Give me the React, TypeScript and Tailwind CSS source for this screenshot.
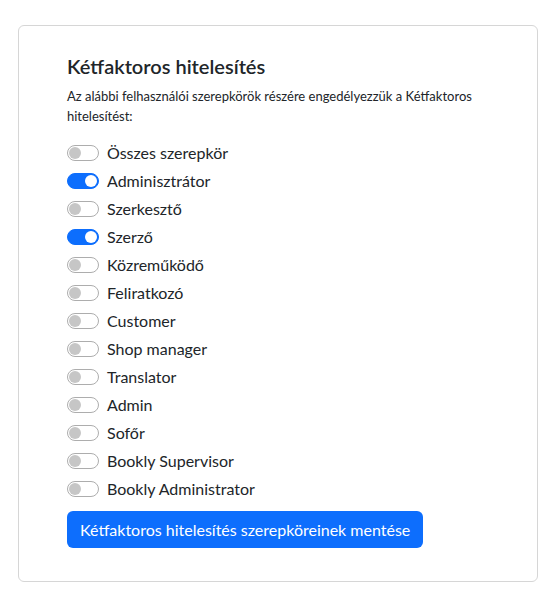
import React from 'react';

const roles: { name: string; on: boolean }[] = [
  { name: 'Összes szerepkör', on: false },
  { name: 'Adminisztrátor', on: true },
  { name: 'Szerkesztő', on: false },
  { name: 'Szerző', on: true },
  { name: 'Közreműködő', on: false },
  { name: 'Feliratkozó', on: false },
  { name: 'Customer', on: false },
  { name: 'Shop manager', on: false },
  { name: 'Translator', on: false },
  { name: 'Admin', on: false },
  { name: 'Sofőr', on: false },
  { name: 'Bookly Supervisor', on: false },
  { name: 'Bookly Administrator', on: false },
];

function Toggle({ on }: { on: boolean }) {
  return (
    <span
      className={
        on
          ? 'flex h-[16px] w-[32px] shrink-0 items-center justify-end rounded-full border border-[#0d6efd] bg-[#0d6efd] px-[1px]'
          : 'flex h-[16px] w-[32px] shrink-0 items-center justify-start rounded-full border border-[#adadad] bg-white px-[1px]'
      }
    >
      <span className={on ? 'h-[12px] w-[12px] rounded-full bg-white' : 'h-[12px] w-[12px] rounded-full bg-[#c6c6c6]'} />
    </span>
  );
}

export default function App() {
  return (
    <div className="min-h-[604px] bg-white px-[18px] pt-[25px] text-[#212529]" style={{ fontFamily: 'Lato, "Open Sans", sans-serif' }}>
      <div className="w-[520px] rounded-[6px] border border-[#d6d6d6] px-[48px] pb-[33px] pt-[28px]">
        <h2 className="text-[20px] font-semibold leading-[1.2]">Kétfaktoros hitelesítés</h2>
        <p className="mt-[8px] text-[13px] leading-[20px]">
          Az alábbi felhasználói szerepkörök részére engedélyezzük a Kétfaktoros hitelesítést:
        </p>
        <div className="mt-[13px] flex flex-col">
          {roles.map((r) => (
            <label key={r.name} className="flex h-[28px] items-center gap-[8px] text-[16px]">
              <Toggle on={r.on} />
              <span>{r.name}</span>
            </label>
          ))}
        </div>
        <button className="mt-[8px] h-[37px] rounded-[6px] bg-[#0d6efd] px-[13px] text-[16px] text-white">
          Kétfaktoros hitelesítés szerepköreinek mentése
        </button>
      </div>
    </div>
  );
}
